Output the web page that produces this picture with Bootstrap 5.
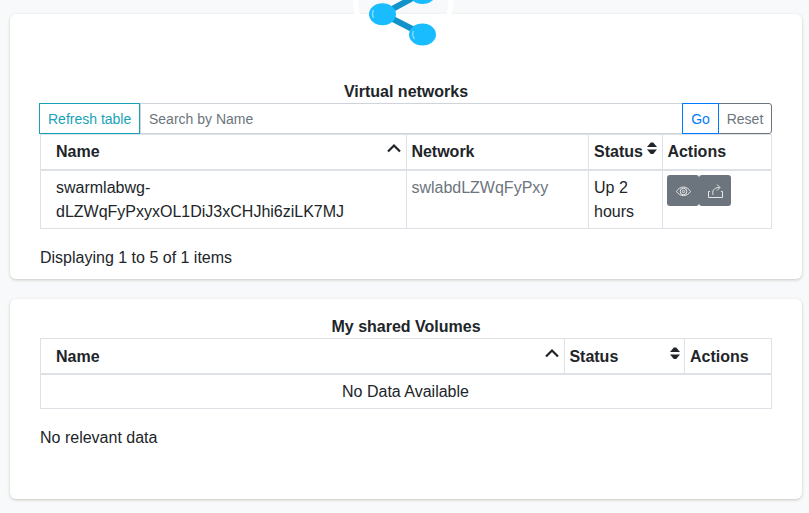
<!DOCTYPE html>
<html lang="en">
<head>
<meta charset="utf-8">
<meta name="viewport" content="width=device-width, initial-scale=1">
<title>Virtual networks</title>
<link href="https://cdn.jsdelivr.net/npm/bootstrap@5.3.0/dist/css/bootstrap.min.css" rel="stylesheet">
<style>
body { font-family: "Liberation Sans", Arial, sans-serif; color: #212529; background: #f8f9fa; height: 513px; overflow: hidden; }
.page { padding: 14px 7px 0 10px; }
.panel { border: 0; border-radius: 6px; background: #fff; box-shadow: 0 1px 3px rgba(60,60,30,.25); padding: 0 30px; position: relative; }
.panel-net { height: 265px; padding-top: 65.600px; margin-bottom: 20px; }
.panel-vol { height: 200px; padding-top: 16px; }
.avatar { position: absolute; left: 343px; top: -60px; width: 100px; height: 100px; }
.tools { margin: -.600px 0 0 -1px; width: 733px; height: 31px; position: relative; z-index: 1; }
.tools .btn, .tools .form-control { font-size: 14px; line-height: 21px; padding: 5px 8px 3px; border-radius: 0; height: 31px; min-height: 0; }
.tools .form-control { border-color: #ced4da; padding: 4px 8px; }
.tools .form-control::placeholder { color: #6c757d; }
.tools .btn-refresh { color: #17a2b8; border-color: #17a2b8; width: 101px; flex: none; }
.tools .form-control { margin-left: 0 !important; }
.tools .btn-go { color: #007bff; border-color: #007bff; z-index: 6; width: 37px; flex: none; }
.tools .btn-reset { color: #6c757d; border-color: #6c757d; border-radius: 0 3px 3px 0; width: 54px; flex: none; padding-left: 7px; padding-right: 7px; }
.grid { table-layout: fixed; width: 732px; border-collapse: collapse; margin: 0 0 17px; color: #212529; }
.grid > :not(caption) > * > * { border: 1px solid #dee2e6; padding: 4.800px 4px 4.800px 4.400px; line-height: 24px; background: none; vertical-align: top; }
.grid > thead > tr > th { border-bottom-width: 2px; white-space: nowrap; padding-right: 5px; }
.grid > :not(caption) > tr > .first { padding-left: 15px; }
.grid > :not(caption) > tr > .status { padding-left: 5px; }
.panel-net .grid > tbody > tr > td { padding-top: 5.600px; padding-bottom: 4px; }
.panel-vol .grid { margin-top: -1px; margin-bottom: 17px; }
.panel-vol .grid > thead > tr > th { padding-top: 5.500px; padding-bottom: 4.500px; padding-right: 4px; }
.panel-vol .grid > tbody > tr > td { padding: 4.500px 5px 4.500px 4px; }
.panel-vol .first .sorter { margin-right: 1px; }
.sorter { float: right; display: block; }
.tiny-btn { width: 32px; height: 31px; padding: 0; background: #6c757d; border: 0; border-radius: 3px; margin-top: -1px; }
.tiny-btn:hover { background: #6c757d; }
</style>
</head>
<body>
<main class="page">
  <section class="card panel panel-net">
    <svg class="avatar" viewBox="0 0 100 100" overflow="visible">
      <circle cx="50.300" cy="46" r="47.8" fill="none" stroke="#fff" stroke-width="5"/>
      <path d="M69 39 30 60 69 80" fill="none" stroke="#1193c9" stroke-width="6"/>
      <g fill="#18bcff"><ellipse cx="69.500" cy="39" rx="13.500" ry="11"/><ellipse cx="29.500" cy="60.300" rx="13.500" ry="11"/><ellipse cx="69.500" cy="80.500" rx="13.500" ry="11"/></g>
      <path d="M20.500 56q-2 4 0 8M60.500 77q-2 4 1 8" fill="none" stroke="#8bdcff" stroke-width="1.300"/>
    </svg>
    <div class="text-center fw-bold">Virtual networks</div>
    <div class="input-group flex-nowrap tools">
      <button class="btn btn-refresh text-nowrap" type="button">Refresh table</button>
      <input class="form-control" type="text" placeholder="Search by Name" aria-label="Search by Name">
      <button class="btn btn-go" type="button">Go</button>
      <button class="btn btn-reset" type="button">Reset</button>
    </div>
    <table class="table grid">
      <colgroup><col style="width:366px"><col style="width:182px"><col style="width:74px"><col style="width:109px"></colgroup>
      <thead><tr>
        <th class="first">Name <svg class="sorter" width="14" height="18"><path d="m1 11.500 6-6 6 6" fill="none" stroke="#212529" stroke-width="2.200"/></svg></th>
        <th>Network</th>
        <th class="status">Status<svg class="sorter" width="10" height="18"><path d="M0 7 3.800 2.500h2.400L10 7zM0 9.500h10L6.200 14H3.800z" fill="#212529"/></svg></th>
        <th>Actions</th>
      </tr></thead>
      <tbody><tr>
        <td class="first">swarmlabwg-dLZWqFyPxyxOL1DiJ3xCHJhi6ziLK7MJ</td>
        <td class="text-secondary">swlabdLZWqFyPxy</td>
        <td class="status">Up 2 hours</td>
        <td><div class="d-flex">
          <button class="btn tiny-btn d-flex align-items-center justify-content-center" type="button" aria-label="View"><svg width="16" height="16" fill="none" stroke="#e5e7e9" stroke-width="1"><path d="M1.500 8.500C5 2.500 12 2.500 15.500 8.500 12 14 5 14 1.500 8.500z"/><circle cx="8.500" cy="8.500" r="3.300"/><circle cx="8.500" cy="8.500" r="1.200"/></svg></button>
          <button class="btn tiny-btn d-flex align-items-center justify-content-center" type="button" aria-label="Share"><svg width="16" height="16" fill="none" stroke="#e5e7e9" stroke-width="1"><path d="M3 8.500H1.500v6h14v-6H14M6 12C5 8 6.500 4.500 12.500 4.500M10 1.500l3 3-3 3"/></svg></button>
        </div></td>
      </tr></tbody>
    </table>
    <div>Displaying 1 to 5 of 1 items</div>
  </section>
  <section class="card panel panel-vol">
    <div class="text-center fw-bold">My shared Volumes</div>
    <table class="table grid">
      <colgroup><col style="width:524px"><col style="width:120px"><col style="width:87px"></colgroup>
      <thead><tr>
        <th class="first">Name <svg class="sorter" width="14" height="18"><path d="m1 11.500 6-6 6 6" fill="none" stroke="#212529" stroke-width="2.200"/></svg></th>
        <th>Status<svg class="sorter" width="10" height="18"><path d="M0 7 3.800 2.500h2.400L10 7zM0 9.500h10L6.200 14H3.800z" fill="#212529"/></svg></th>
        <th class="status">Actions</th>
      </tr></thead>
      <tbody><tr><td colspan="3" class="text-center">No Data Available</td></tr></tbody>
    </table>
    <div>No relevant data</div>
  </section>
</main>
<script src="https://cdn.jsdelivr.net/npm/bootstrap@5.3.0/dist/js/bootstrap.bundle.min.js"></script>
</body>
</html>
